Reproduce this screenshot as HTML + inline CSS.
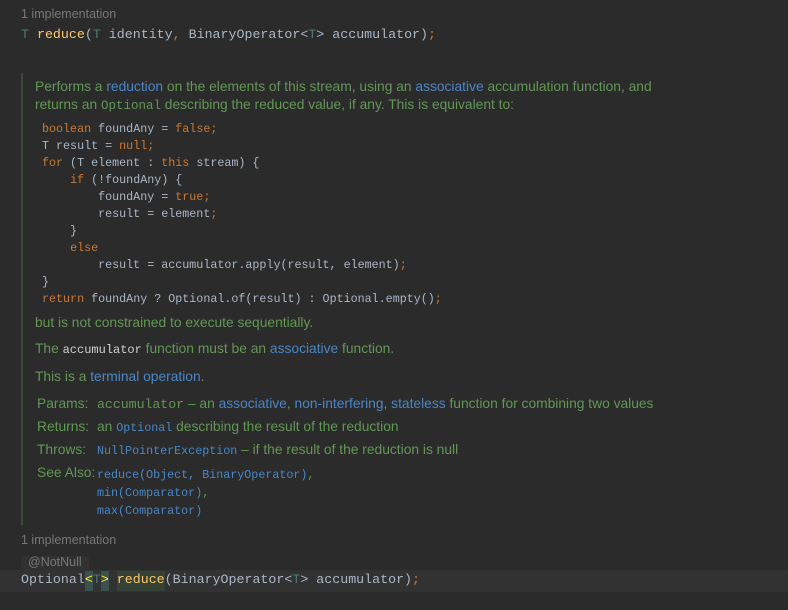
<!DOCTYPE html>
<html><head><meta charset="utf-8"><style>
body{margin:0;width:788px;height:610px;background:#2b2b2b;overflow:hidden;position:relative;font-family:"Liberation Sans",sans-serif}
.a{position:absolute;white-space:pre}
.m{font-family:"Liberation Mono",monospace}
.hint{color:#787878;font-size:12.5px}
.code{font-size:13.3px;color:#a9b7c6}
.t{color:#507874}.f{color:#ffc66d}.o{color:#cc7832}
.d{color:#629755;font-size:13.8px}
.l{color:#4a86c7}
.c{font-size:11.7px;color:#a9b7c6}
.k{color:#cc7832}
.lm{font-family:"Liberation Mono",monospace;color:#4a86c7;font-size:11.7px}
.w{font-family:"Liberation Mono",monospace;color:#d0d0d0;font-size:12px}
</style></head><body>
<div class="a hint" style="left:21px;top:7px">1 implementation</div>
<div class="a m code" style="left:21px;top:27px"><span class="t">T</span> <span class="f">reduce</span>(<span class="t">T</span> identity<span class="o">,</span> BinaryOperator&lt;<span class="t">T</span>&gt; accumulator)<span class="o">;</span></div>
<div style="position:absolute;left:21px;top:73px;width:2px;height:452px;background:#3b4a38"></div>
<div class="a d" style="left:35px;top:79px">Performs a <span class="l">reduction</span> on the elements of this stream, using an <span class="l">associative</span> accumulation function, and</div>
<div class="a d" style="left:35px;top:97px">returns an <span class="m" style="font-size:12.5px">Optional</span> describing the reduced value, if any. This is equivalent to:</div>
<div class="a m c" style="left:42px;top:121px;line-height:17px"><span class="k">boolean</span> foundAny = <span class="k">false;</span>
T result = <span class="k">null;</span>
<span class="k">for</span> (T element : <span class="k">this</span> stream) {
    <span class="k">if</span> (!foundAny) {
        foundAny = <span class="k">true;</span>
        result = element<span class="k">;</span>
    }
    <span class="k">else</span>
        result = accumulator.apply(result, element)<span class="k">;</span>
}
<span class="k">return</span> foundAny ? Optional.of(result) : Optional.empty()<span class="k">;</span></div>
<div class="a d" style="left:35px;top:315px">but is not constrained to execute sequentially.</div>
<div class="a d" style="left:35px;top:341px">The <span class="w">accumulator</span> function must be an <span class="l">associative</span> function.</div>
<div class="a d" style="left:35px;top:369px">This is a <span class="l">terminal operation</span>.</div>
<div class="a d" style="left:37px;top:396px">Params:</div>
<div class="a d" style="left:97px;top:396px"><span class="m" style="font-size:13.2px">accumulator</span> – an <span class="l">associative</span>, <span class="l">non-interfering</span>, <span class="l">stateless</span> function for combining two values</div>
<div class="a d" style="left:37px;top:419px">Returns:</div>
<div class="a d" style="left:97px;top:419px">an <span class="lm">Optional</span> describing the result of the reduction</div>
<div class="a d" style="left:37px;top:442px">Throws:</div>
<div class="a d" style="left:97px;top:442px"><span class="lm">NullPointerException</span> – if the result of the reduction is null</div>
<div class="a d" style="left:37px;top:465px">See Also:</div>
<div class="a lm" style="left:97px;top:466px;line-height:18px">reduce(Object, BinaryOperator)<span style="color:#629755">,</span>
min(Comparator)<span style="color:#629755">,</span>
max(Comparator)</div>
<div class="a hint" style="left:21px;top:533px">1 implementation</div>
<div style="position:absolute;left:21px;top:556px;width:68px;height:15px;background:#313131;border-radius:3px"></div>
<div class="a hint" style="left:28px;top:555px">@NotNull</div>
<div style="position:absolute;left:0;top:570px;width:788px;height:22px;background:#323232"></div>
<div style="position:absolute;left:85px;top:571px;width:8px;height:20px;background:#3b514d"></div>
<div style="position:absolute;left:101px;top:571px;width:8px;height:20px;background:#3b514d"></div>
<div style="position:absolute;left:117px;top:571px;width:48px;height:20px;background:#344134"></div>
<div class="a m code" style="left:21px;top:572px">Optional<span style="color:#ffef28">&lt;</span><span class="t">T</span><span style="color:#ffef28">&gt;</span> <span class="f">reduce</span>(BinaryOperator&lt;<span class="t">T</span>&gt; accumulator)<span class="o">;</span></div>
</body></html>
